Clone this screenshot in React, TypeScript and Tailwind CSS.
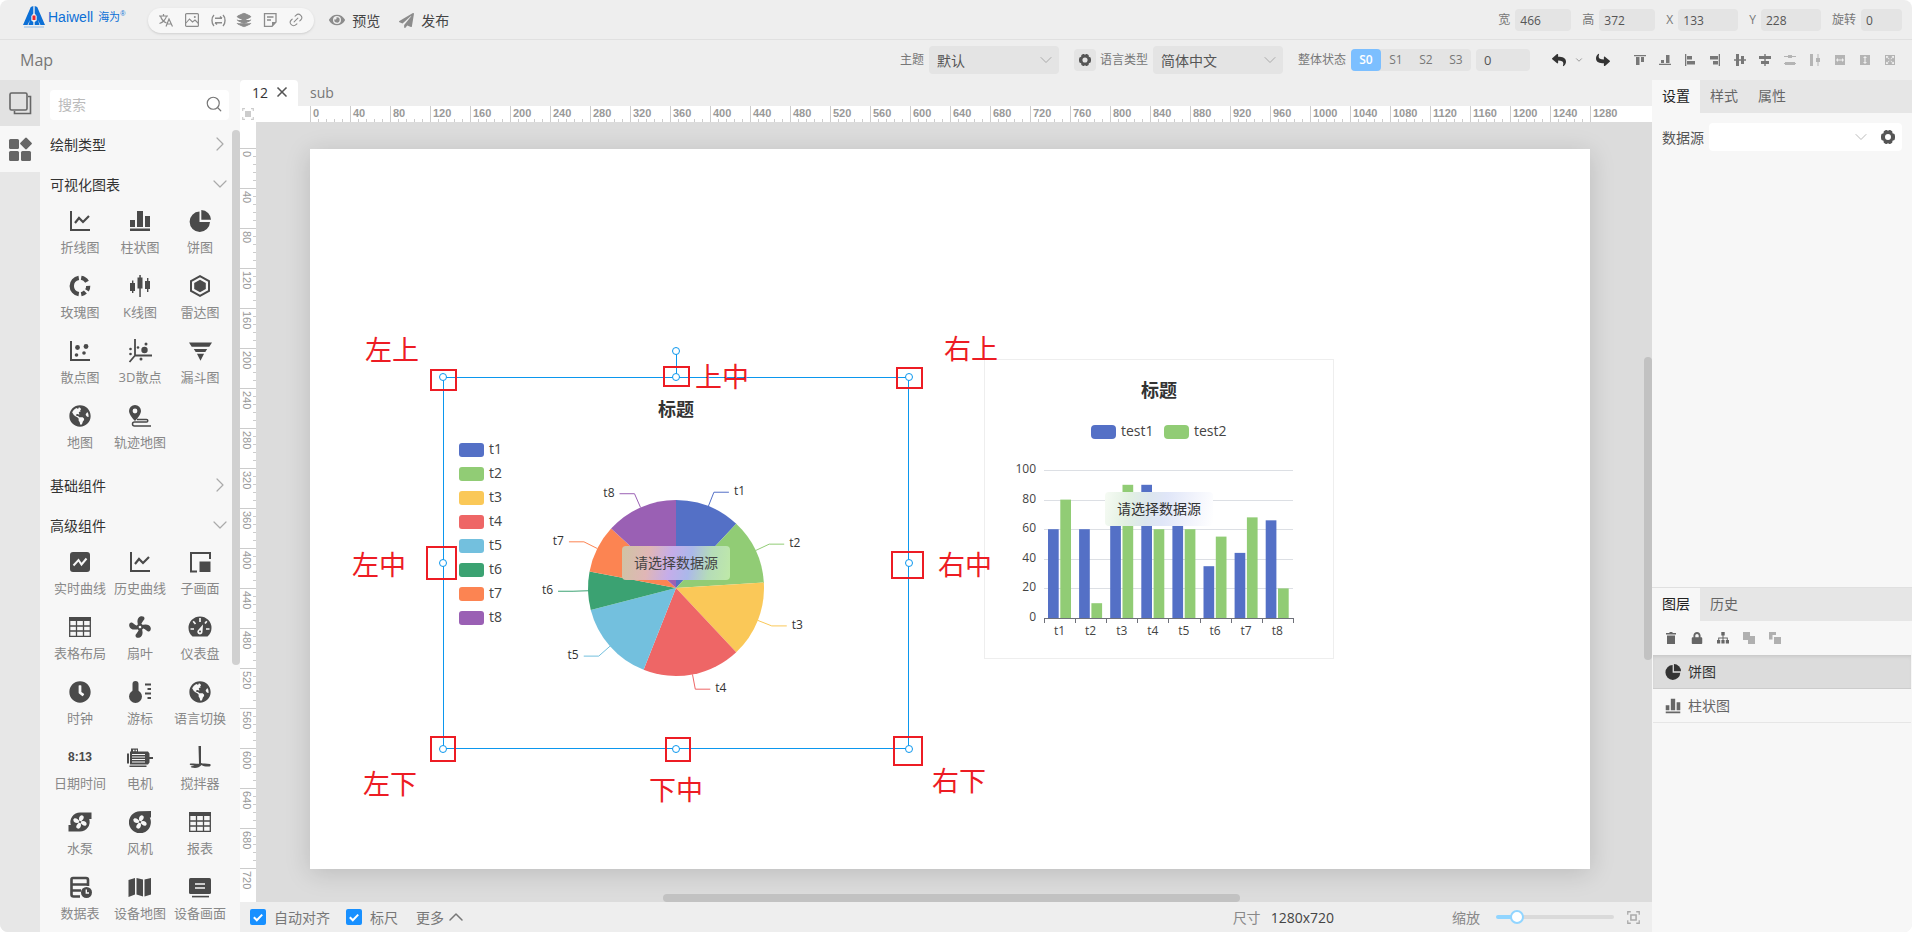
import { useState, type ReactNode } from 'react'
import { FaClock, FaEye, FaGlobeAmericas, FaLock, FaPaperPlane, FaReply } from 'react-icons/fa'
import { ChevronDown, ChevronRight, ChevronUp, Layers, Link2, Search, X } from 'lucide-react'

type IconProps = { children: ReactNode; size?: string; box?: number }

const Icon = ({ children, size = 'size-[22px]', box = 22 }: IconProps) => (
  <svg viewBox={`0 0 ${box} ${box}`} className={size} fill="currentColor" aria-hidden="true">
    {children}
  </svg>
)

const Stroke = ({ d, w = 2 }: { d: string; w?: number }) => (
  <path d={d} fill="none" stroke="currentColor" strokeWidth={w} />
)

/* ---------- Component library icons ---------- */

const LineIcon = () => (
  <Icon>
    <Stroke d="M2 1v19h19" />
    <Stroke d="M6 13l4-5 4 4 6-6" w={2.2} />
  </Icon>
)

const BarIcon = ({ size }: { size?: string }) => (
  <Icon size={size}>
    <path d="M1 10h5v7H1zM8 1h6v16H8zM16 6h5v11h-5zM1 18.6h20v2.4H1z" />
  </Icon>
)

const PieIcon = ({ size }: { size?: string }) => (
  <Icon size={size}>
    <path d="M10.500 1.500V12H21A10.200 10.200 0 1 1 10.500 1.500z" />
    <path d="M12.300 0A10 10 0 0 1 22 9.800h-9.700z" />
  </Icon>
)

const RoseIcon = () => (
  <Icon>
    <Stroke d="M9.8 2.800a8.300 8.300 0 0 0 0 16.400" w={4.4} />
    <Stroke d="M12.200 2.800a8.300 8.300 0 0 1 5.800 4M19.200 10.800a8.200 8.200 0 0 1-1.200 4.600M16.400 17a8.200 8.200 0 0 1-4.200 2.200" w={4.2} />
  </Icon>
)

const KLineIcon = () => (
  <Icon>
    <path d="M1 8h5v8H1zM3 5.500h1.400V18H3zM8.500 2.500h5v11h-5zM10.300 0h1.500v22h-1.500zM16 6h5v8h-5zM18 3h1.400v14H18z" />
  </Icon>
)

const RadarIcon = () => (
  <Icon>
    <Stroke d="M11 1.200l9 4.900v9.800l-9 4.900-9-4.900V6.100z" />
    <path d="M11 4.800l5.800 3.100v6.200L11 17.200l-5.800-3.100V7.900z" />
  </Icon>
)

const ScatterIcon = () => (
  <Icon>
    <Stroke d="M2 1v19h19" />
    <circle cx="8.500" cy="7.500" r="2.400" />
    <circle cx="17" cy="6.500" r="2.400" />
    <circle cx="7.500" cy="15" r="1.800" />
    <circle cx="15" cy="13" r="1.800" />
  </Icon>
)

const Scatter3dIcon = () => (
  <Icon size="size-6" box={24}>
    <Stroke d="M7 0v16.500h17M7 16.500L1.500 23" w={1.8} />
    <circle cx="16.500" cy="11" r="3.200" />
    <circle cx="18" cy="5" r="1.500" />
    <circle cx="10" cy="8.500" r="1.300" />
    <circle cx="2.500" cy="10" r="1.300" />
    <circle cx="2.500" cy="15" r="1.300" />
    <circle cx="13" cy="20" r="1.500" />
  </Icon>
)

const FunnelIcon = () => (
  <Icon size="size-[23px]">
    <path d="M0 2.500h22l-2.600 4H2.600zM4.600 8.500h12.800l-1.800 3H6.400zM7.600 13.200h6.800L11 19.800z" />
  </Icon>
)

const TrackIcon = () => (
  <Icon>
    <path
      fillRule="evenodd"
      d="M6 0a6 6 0 0 1 6 6c0 4-6 10-6 10S0 10 0 6a6 6 0 0 1 6-6zm0 3.600a2.400 2.400 0 1 0 0 4.800 2.400 2.400 0 0 0 0-4.800z"
    />
    <Stroke d="M8 14.500h9.500a1.300 1.300 0 0 1 0 2.600H5.500a2 2 0 0 0 0 4H22" w={1.5} />
  </Icon>
)

const RealtimeIcon = () => (
  <Icon>
    <rect x="1" y="1" width="20" height="20" rx="3" />
    <path d="M4.500 14.500l5-5.500 3 4.500 5-6" fill="none" stroke="#f7f7f7" strokeWidth="2" />
  </Icon>
)

const SubPageIcon = () => (
  <Icon>
    <Stroke d="M21 8V2H2v18.500h6" />
    <path d="M10.500 10.500H21.500V21H10.500z" />
  </Icon>
)

const TableIcon = () => (
  <Icon>
    <path d="M0 1h22v4H0z" />
    <Stroke d="M.7 4v16.300h20.600V4M.7 10h20.600M.7 15h20.600M7.500 5v15M14.500 5v15" w={1.3} />
  </Icon>
)

const FanIcon = () => (
  <Icon>
    {[0, 90, 180, 270].map((a) => (
      <path
        key={a}
        transform={`rotate(${a} 11 11)`}
        d="M9.600 9.800C7.600 6.500 8 1.200 11.800.3c2.800-.6 4.400 1.200 3.400 3.100C14 5.400 12.200 6.500 12.200 9.400z"
      />
    ))}
    <Stroke d="M11 8.600a2.400 2.400 0 1 0 0 4.800 2.400 2.400 0 0 0 0-4.800z" w={1.6} />
  </Icon>
)

const GaugeIcon = () => (
  <Icon size="size-6" box={24}>
    <path d="M12 1.500A11.500 11.500 0 0 0 .5 13c0 3.500 1.500 6.500 4 8.500h15c2.500-2 4-5 4-8.500A11.500 11.500 0 0 0 12 1.500z" />
    <path d="M12 3v4M5.200 6.200L7.500 9M18.800 6.200L17 8.500M2.500 14h3.500M18 14h3.500" stroke="#f7f7f7" strokeWidth="1.700" />
    <path d="M15 9.500l-.5 7.500a2.600 2.600 0 1 1-4.800-1.500z" fill="#f7f7f7" />
    <circle cx="12" cy="16.500" r="1" />
  </Icon>
)

const CursorIcon = () => (
  <Icon>
    <circle cx="6.500" cy="15.500" r="6.500" />
    <path d="M3.500 3a3 3 0 0 1 6 0v10h-6z" />
    <path d="M16 2.500h6v2h-6zM18.500 7h3.500v2h-3.500zM16 11.500h6v2h-6zM18.500 16h3.500v2h-3.500z" />
  </Icon>
)

const DateIcon = () => (
  <span className="font-['Liberation_Sans',sans-serif] text-[12px] leading-6 font-bold">8:13</span>
)

const MotorIcon = () => (
  <Icon size="size-[26px]" box={26}>
    <path d="M4 4.500h7v4H4zM0 9.500h2v10H0zM3 7.500h18l1.500 2v9l-1.500 2H3zM22 13h4v2h-4zM2.500 21.500h17V23h-17z" />
    <path d="M5 10.500h13M5 13h13M5 15.500h13M5 18h13" stroke="#f7f7f7" />
    <path d="M6 5.800h1.500v1.500H6zM8.600 5.800h1.400v1.500H8.600z" fill="#f7f7f7" />
  </Icon>
)

const MixerIcon = () => (
  <Icon>
    <path d="M9.500 0h2.500v17c2 1 5 .2 9 1 1 .3 1 2-.5 2.400-3 .5-6-.2-8-1.400-2.500 3-6 3.500-10 2.500-1-.3-1-1 0-1.300l3-.5-4-.7c-1-.3-1-1.200 0-1.400 3-.4 6 0 8.500.2z" />
  </Icon>
)

const Blades = ({ cx, cy }: { cx: number; cy: number }) => (
  <g transform={`translate(${cx} ${cy})`} fill="#f7f7f7">
    {[20, 110, 200, 290].map((a) => (
      <path key={a} transform={`rotate(${a})`} d="M0 0C-3-2-3-6.500 0-7 3-7 2.500-3 0 0z" />
    ))}
    <circle r="1.100" className="fill-[#4a4a4a]" />
  </g>
)

const PumpIcon = () => (
  <Icon size="size-[24px]" box={24}>
    <path d="M23.500 2.500V9h-2.300A9.600 9.600 0 0 1 12 21.500H.5V15h2.300A9.600 9.600 0 0 1 12 2.500z" />
    <Blades cx={12} cy={12} />
  </Icon>
)

const BlowerIcon = () => (
  <Icon>
    <path d="M22 0v6.500h-1.200A11 11 0 1 1 11 .3L22 0z" />
    <Blades cx={11} cy={11} />
  </Icon>
)

const DataTableIcon = () => (
  <Icon size="size-[23px]" box={23}>
    <Stroke d="M11 20.500H4.500a2 2 0 0 1-2-2v-15a1.500 1.500 0 0 1 1.500-1.500h13a2 2 0 0 1 2 2V10" w={2.6} />
    <Stroke d="M3 8.500h16M3 14.500h9" w={2.6} />
    <circle cx="17.500" cy="16.500" r="5.500" />
    <path d="M17.300 13.500v3.500H20" fill="none" stroke="#f7f7f7" strokeWidth="1.400" />
  </Icon>
)

const MapIcon = () => (
  <Icon size="size-[24px]" box={24}>
    <path d="M.5 5L7 3v16.500L.5 22zM8.500 3l6.500 1.500V21.500L8.500 19.500zM16.500 4.500L23 3v16.500l-6.500 2z" />
  </Icon>
)

const ScreenIcon = () => (
  <Icon>
    <rect x="0" y="2" width="22" height="16" rx="1.500" />
    <path d="M3 19.800h17v1.600H3z" />
    <path d="M6 8h10M6 12h10" stroke="#f7f7f7" strokeWidth="1.700" />
  </Icon>
)

const Gear = ({ size = 'size-[14px]' }: { size?: string }) => (
  <Icon size={size} box={14}>
    <path
      fillRule="evenodd"
      d="M4.800 0h.8l1.400.8L8.400 0h.8l2 1.200.3 2L13.500 4l.5 2v2l-.5 2-2 .8-.3 2-2 1.200h-.8L7 13.200 5.600 14h-.8l-2-1.200-.3-2L.5 10 0 8V6l.5-2 2-.8.3-2zM7 4a3 3 0 1 0 0 6 3 3 0 0 0 0-6z"
    />
  </Icon>
)

/* ---------- Top bars ---------- */

const Logo = () => (
  <div className="flex h-6 items-center gap-[3px]">
    <svg viewBox="0 0 22 22" className="h-[22px] w-[22px]" aria-hidden="true">
      <path d="M10.300 0v7.500L8.300 10v4.500l2 1.500v3H5.500L7 14l-2.500 5H0L7.800 1z" fill="#0b6fd6" />
      <path d="M11.700 0v7.500l2 2.500v4.500l-2 1.500v3h4.800L15 14l2.500 5H22L14.200 1z" fill="#0b6fd6" />
      <rect x="9.500" y="9.500" width="3" height="4.500" fill="#e8262c" />
      <path d="M1 20h20v2H1z" fill="#0b6fd6" opacity=".2" />
    </svg>
    <span className="flex items-center font-['Liberation_Sans','Noto_Sans_CJK_SC',sans-serif] text-[#0b6fd6]">
      <span className="text-[14px] leading-5">Haiwell</span>
      <span className="pl-[5px] text-[11px] leading-5">海为</span>
      <sup className="text-[7px]">®</sup>
    </span>
  </div>
)

const quickTools = [
  {
    name: '语言',
    icon: (
      <Icon size="size-[14px]" box={14}>
        <Stroke d="M0 3h9M4.500 1v2M7.500 3C7 6 4 9.500.5 10.500M1.500 3c1 3.500 3.500 6 6 7" w={1.2} />
        <Stroke d="M7 13.500L10 6l3.500 7.500M8 11h4.500" w={1.2} />
      </Icon>
    ),
  },
  {
    name: '图片',
    icon: (
      <Icon size="size-[14px]" box={14}>
        <rect x=".6" y=".6" width="12.800" height="12.800" rx="1" fill="none" stroke="currentColor" strokeWidth="1.200" />
        <Stroke d="M1 10l3.500-4 3 3 2.500-2 3.500 3.500" w={1.1} />
        <circle cx="9.800" cy="4" r="1" />
      </Icon>
    ),
  },
  {
    name: '变量',
    icon: (
      <Icon size="size-[15px]" box={15}>
        <Stroke d="M3 2C.3 4.500.3 10.500 3 13M12 2c2.700 2.500 2.700 8.500 0 11M4 5.300h7M9 3.500l2 1.800M11 9.700H4M6 11.500L4 9.700" w={1.4} />
      </Icon>
    ),
  },
  { name: '图层', icon: <Layers className="size-4 fill-[#8c8c8c]" strokeWidth={1.500} /> },
  {
    name: '备注',
    icon: (
      <Icon size="size-[14px]" box={14}>
        <path d="M13.300 9H9v4.500z" />
        <Stroke d="M9 13.300H1.500V.7h11.500V9zM4 4h6.500M4 7h4" w={1.3} />
      </Icon>
    ),
  },
  { name: '链接', icon: <Link2 className="size-4 -rotate-45" strokeWidth={1.600} /> },
]

const NumberField = ({ label, value, width }: { label: string; value: string; width: string }) => (
  <label className="flex items-center gap-[5px] text-[12px] text-[#777]">
    {label}
    <input
      defaultValue={value}
      className={`${width} h-[22px] rounded-sm bg-[#e4e4e4] px-[5px] text-[12px] text-[#555] outline-none`}
    />
  </label>
)

const TopBar = () => (
  <header className="flex h-10 items-center border-b border-[#e0e0e0] pr-2.5 pb-[5px] pl-[23px]">
    <Logo />
    <nav className="mt-1.5 ml-[23px] flex h-[25px] items-center rounded-full bg-[#f7f7f7] px-[5px] text-[#8c8c8c] shadow-sm">
      {quickTools.map((t) => (
        <button key={t.name} aria-label={t.name} className="flex w-[26px] justify-center">
          {t.icon}
        </button>
      ))}
    </nav>
    <button className="mt-1.5 ml-[15px] flex items-center gap-[7px] text-[14px] text-[#444]">
      <FaEye className="size-4 text-[#8c8c8c]" />
      预览
    </button>
    <button className="mt-1.5 ml-[19px] flex items-center gap-[7px] text-[14px] text-[#444]">
      <FaPaperPlane className="size-[15px] text-[#8c8c8c]" />
      发布
    </button>
    <div className="mt-1.5 ml-auto flex gap-[11px]">
      <NumberField label="宽" value="466" width="w-14" />
      <NumberField label="高" value="372" width="w-14" />
      <NumberField label="X" value="133" width="w-[60px]" />
      <NumberField label="Y" value="228" width="w-[60px]" />
      <NumberField label="旋转" value="0" width="w-[41px]" />
    </div>
  </header>
)

const BarSelect = ({ label, value }: { label: string; value: string }) => (
  <label className="flex items-center gap-[5px] text-[12px] text-[#777]">
    {label}
    <span className="relative">
      <select className="h-7 w-[130px] appearance-none rounded-sm bg-[#e4e4e4] px-2 text-[14px] text-[#555] outline-none">
        <option>{value}</option>
      </select>
      <ChevronDown className="pointer-events-none absolute top-1 right-[3px] size-5 text-[#aaa]" strokeWidth={1.200} />
    </span>
  </label>
)

const alignTools = [
  { name: '顶对齐', dim: false, d: 'M0 1h12v1.300H0zM2 3h3.500v8H2zM7 3h3v5H7z' },
  { name: '底对齐', dim: false, d: 'M0 9.700h12V11H0zM2 6h3v3H2zM7 1h3.500v8H7z' },
  { name: '左对齐', dim: false, d: 'M1 0h1.300v12H1zM3 2h5v3.500H3zM3 7h8v3.500H3z' },
  { name: '右对齐', dim: false, d: 'M9.700 0H11v12H9.700zM1 2h8v3.500H1zM4 7h5v3.500H4z' },
  { name: '垂直居中', dim: false, d: 'M0 5.300h12v1.400H0zM2 0h3v12H2zM7 2h3v8H7z' },
  { name: '水平居中', dim: false, d: 'M5.300 0h1.400v12H5.300zM0 2h12v3H0zM2 7h8v3H2z' },
  { name: '垂直分布', dim: true, d: 'M0 2h4V1h4v1h4v1H8v1H4V3H0zM0 9h1V8h10v1h1v1h-1v1H1v-1H0z' },
  { name: '水平分布', dim: true, d: 'M1 0h3v12H1zM8.500 0h1v4h1.500v4H9.500v4h-1V8H7V4h1.500z' },
  { name: '等宽', dim: true, d: 'M1 1h10v10H1zM2 6l2 2V6.600h4V8l2-2-2-2v1.400H4V4z' },
  { name: '等高', dim: true, d: 'M1 1h10v10H1zM6 2L4 4h1.400v4H4l2 2 2-2H6.600V4H8z' },
  { name: '等大小', dim: true, d: 'M1 1h10v10H1zM2 2v2.500l1-1 2 2 .6-.6-2-2 .9-.9zM10 2H7.500l.9.900-2 2 .6.600 2-2 1 1zM2 10V7.500l1 1 2-2 .6.600-2 2 .9.900zM10 10H7.500l.9-.9-2-2 .6-.6 2 2 1-1z' },
]

const ToolBar = () => {
  const [state, setState] = useState('S0')
  return (
    <div className="flex h-10 items-center pr-2.5 pl-5">
      <h1 className="text-[16px] text-[#777]">Map</h1>
      <div className="ml-auto flex items-center">
        <BarSelect label="主题" value="默认" />
        <button aria-label="语言设置" className="mr-1 ml-[15px] flex size-[22px] items-center justify-center rounded-sm bg-[#e4e4e4] text-[#555]">
          <Gear size="size-3" />
        </button>
        <BarSelect label="语言类型" value="简体中文" />
        <span className="mr-[5px] ml-[15px] text-[12px] text-[#777]">整体状态</span>
        <div className="flex h-[22px] rounded-sm bg-[#e4e4e4]">
          {['S0', 'S1', 'S2', 'S3'].map((s) => (
            <button
              key={s}
              onClick={() => setState(s)}
              className={
                s === state
                  ? 'w-[30px] rounded-sm bg-[#7cbfff] text-[12px] font-semibold text-white'
                  : 'w-[30px] text-[12px] text-[#777]'
              }
            >
              {s}
            </button>
          ))}
        </div>
        <input
          aria-label="状态值"
          defaultValue="0"
          className="ml-[5px] h-[22px] w-[54px] rounded-sm bg-[#e4e4e4] px-2 text-[13px] text-[#555] outline-none"
        />
        <button aria-label="撤销" className="ml-[22px]">
          <FaReply className="size-3.5 text-[#333]" />
        </button>
        <button aria-label="撤销记录" className="ml-2">
          <ChevronDown className="size-2.5 text-[#888]" />
        </button>
        <button aria-label="重做" className="mr-[17px] ml-3">
          <FaReply className="size-3.5 rotate-180 text-[#333]" />
        </button>
        {alignTools.map((t) => (
          <button
            key={t.name}
            aria-label={t.name}
            className={t.dim ? 'flex w-[25px] justify-center text-[#b4b4b4]' : 'flex w-[25px] justify-center text-[#777]'}
          >
            <Icon size="size-3" box={12}>
              <path d={t.d} fillRule={t.dim ? 'evenodd' : 'nonzero'} />
            </Icon>
          </button>
        ))}
      </div>
    </div>
  )
}

/* ---------- Component library ---------- */

const chartItems = [
  { name: '折线图', icon: <LineIcon /> },
  { name: '柱状图', icon: <BarIcon /> },
  { name: '饼图', icon: <PieIcon /> },
  { name: '玫瑰图', icon: <RoseIcon /> },
  { name: 'K线图', icon: <KLineIcon /> },
  { name: '雷达图', icon: <RadarIcon /> },
  { name: '散点图', icon: <ScatterIcon /> },
  { name: '3D散点', icon: <Scatter3dIcon /> },
  { name: '漏斗图', icon: <FunnelIcon /> },
  { name: '地图', icon: <FaGlobeAmericas className="size-[22px]" /> },
  { name: '轨迹地图', icon: <TrackIcon /> },
]

const advancedItems = [
  { name: '实时曲线', icon: <RealtimeIcon /> },
  { name: '历史曲线', icon: <LineIcon /> },
  { name: '子画面', icon: <SubPageIcon /> },
  { name: '表格布局', icon: <TableIcon /> },
  { name: '扇叶', icon: <FanIcon /> },
  { name: '仪表盘', icon: <GaugeIcon /> },
  { name: '时钟', icon: <FaClock className="size-[22px]" /> },
  { name: '游标', icon: <CursorIcon /> },
  { name: '语言切换', icon: <FaGlobeAmericas className="size-[22px]" /> },
  { name: '日期时间', icon: <DateIcon /> },
  { name: '电机', icon: <MotorIcon /> },
  { name: '搅拌器', icon: <MixerIcon /> },
  { name: '水泵', icon: <PumpIcon /> },
  { name: '风机', icon: <BlowerIcon /> },
  { name: '报表', icon: <TableIcon /> },
  { name: '数据表', icon: <DataTableIcon /> },
  { name: '设备地图', icon: <MapIcon /> },
  { name: '设备画面', icon: <ScreenIcon /> },
]

const Group = ({ title, items }: { title: string; items?: { name: string; icon: ReactNode }[] }) => (
  <section>
    <button className="flex h-10 w-full items-center justify-between pl-2.5 text-[14px] text-[#333]">
      {title}
      {items ? (
        <ChevronDown className="size-6 text-[#aaa]" strokeWidth={1.200} />
      ) : (
        <ChevronRight className="size-6 text-[#aaa]" strokeWidth={1.200} />
      )}
    </button>
    {items && (
      <div className="grid grid-cols-3 pt-px pr-0.5 pl-2.5">
        {items.map((item) => (
          <button key={item.name} className="flex h-[65px] flex-col items-center pt-1 text-[#4a4a4a]">
            <span className="flex h-6 items-center">{item.icon}</span>
            <span className="pt-1 text-[13px] leading-5 whitespace-nowrap text-[#888]">{item.name}</span>
          </button>
        ))}
      </div>
    )}
  </section>
)

const Library = () => (
  <aside className="flex w-60 shrink-0">
    <div className="w-10 bg-[#e7e7e7] text-[#666]">
      <button aria-label="画面" className="flex h-[46px] w-10 items-center justify-center bg-[#e2e2e2]">
        <Icon size="size-[23px]" box={23}>
          <rect x="1" y="1" width="17" height="17" rx="1.500" fill="none" stroke="currentColor" strokeWidth="1.600" />
          <Stroke d="M19 4.500h2.500v17h-16V19" w={1.600} />
        </Icon>
      </button>
      <button aria-label="组件" className="flex h-[46px] w-10 items-center justify-center bg-[#f7f7f7]">
        <Icon size="size-[24px]" box={24}>
          <rect x="1" y="2" width="10" height="10" rx="1.500" />
          <rect x="1" y="14" width="10" height="10" rx="1.500" />
          <rect x="13" y="14" width="10" height="10" rx="1.500" />
          <rect x="13.500" y="2" width="9" height="9" rx="1.200" transform="rotate(45 18 6.500)" />
        </Icon>
      </button>
    </div>
    <div className="flex min-w-0 flex-1 flex-col bg-[#f7f7f7]">
      <div className="py-2.5 pr-[11px] pl-2.5">
        <label className="flex h-[30px] items-center rounded-sm bg-white pr-1.5 pb-0.5 pl-2">
          <input
            aria-label="搜索"
            placeholder="搜索"
            className="min-w-0 flex-1 text-[14px] outline-none placeholder:text-[#bbb]"
          />
          <Search className="size-[18px] text-[#777]" strokeWidth={1.600} />
        </label>
      </div>
      <div className="flex min-h-0 flex-1">
        <div className="min-w-0 flex-1 overflow-hidden">
          <div className="-mt-1.5">
            <Group title="绘制类型" />
            <Group title="可视化图表" items={chartItems} />
            <Group title="基础组件" />
            <Group title="高级组件" items={advancedItems} />
          </div>
        </div>
        <div className="w-2">
          <div className="h-2/3 rounded-full bg-[#d0d0d0]" />
        </div>
      </div>
    </div>
  </aside>
)

/* ---------- Rulers ---------- */

const hMarks = Array.from({ length: 33 }, (_, i) => i * 40)
const vMarks = Array.from({ length: 19 }, (_, i) => i * 40)

const RulerTop = () => (
  <div className="flex h-4 overflow-hidden bg-white pl-[54px] font-['Liberation_Sans',sans-serif] text-[11px] font-bold text-[#999]">
    {hMarks.map((m) => (
      <div key={m} className="flex h-4 w-10 shrink-0 flex-col justify-between border-l border-[#ccc]">
        <span className="h-[13px] pl-0.5 leading-[14px]">{m}</span>
        {m < 1280 && (
          <span className="flex h-[3px] gap-[7px] pl-[7px]">
            <i className="w-px bg-[#ccc]" />
            <i className="w-px bg-[#ccc]" />
            <i className="w-px bg-[#ccc]" />
            <i className="w-px bg-[#ccc]" />
          </span>
        )}
      </div>
    ))}
  </div>
)

const RulerLeft = () => (
  <div className="flex w-4 shrink-0 flex-col overflow-hidden bg-white pt-[26px] font-['Liberation_Sans',sans-serif] text-[11px] text-[#999]">
    {vMarks.map((m) => (
      <div key={m} className="flex h-10 w-4 shrink-0 justify-between border-t border-[#ccc]">
        <span className="w-[13px] pt-0.5 leading-[13px] [writing-mode:vertical-rl]">{m}</span>
        {m < 720 && (
          <span className="flex w-[3px] flex-col gap-[7px] pt-[7px]">
            <i className="h-px bg-[#ccc]" />
            <i className="h-px bg-[#ccc]" />
            <i className="h-px bg-[#ccc]" />
            <i className="h-px bg-[#ccc]" />
          </span>
        )}
      </div>
    ))}
  </div>
)

/* ---------- Charts ---------- */

const palette = ['#5470c6', '#91cc75', '#fac858', '#ee6666', '#73c0de', '#3ba272', '#fc8452', '#9a60b4']
const test1 = [60, 60, 70, 90, 75, 35, 44, 66]
const test2 = [80, 10, 90, 60, 60, 55, 68, 20]

const point = (cx: number, cy: number, r: number, a: number) => [cx + r * Math.sin(a), cy - r * Math.cos(a)]

const PieChart = () => {
  const total = test1.reduce((a, b) => a + b, 0)
  const cx = 233
  const cy = 211
  let angle = 0
  const slices = test1.map((v, i) => {
    const from = angle
    angle += (v / total) * Math.PI * 2
    const mid = (from + angle) / 2
    const [x1, y1] = point(cx, cy, 88, from)
    const [x2, y2] = point(cx, cy, 88, angle)
    const [lx, ly] = point(cx, cy, 88, mid)
    const [mx, my] = point(cx, cy, 103, mid)
    const side = mid < Math.PI ? 1 : -1
    return { i, side, my, mx, d: `M${cx} ${cy}L${x1} ${y1}A88 88 0 0 1 ${x2} ${y2}z`, line: `M${lx} ${ly}L${mx} ${my}h${side * 15}` }
  })
  return (
    <svg className="size-full" viewBox="0 0 466 372">
      <text x="233" y="39" textAnchor="middle" fontSize="18" fontWeight="bold" fill="#333">
        标题
      </text>
      {palette.map((c, i) => (
        <g key={c}>
          <rect x="16" y={66 + i * 24} width="25" height="14" rx="3" fill={c} />
          <text x="46" y={77 + i * 24} fontSize="14" fill="#444">{`t${i + 1}`}</text>
        </g>
      ))}
      {slices.map((s) => (
        <g key={s.i}>
          <path d={s.d} fill={palette[s.i]} />
          <path d={s.line} fill="none" stroke={palette[s.i]} />
          <text x={s.mx + s.side * 20} y={s.my + 3} fontSize="12" textAnchor={s.side > 0 ? 'start' : 'end'} fill="#333">
            {`t${s.i + 1}`}
          </text>
        </g>
      ))}
    </svg>
  )
}

const BarChart = () => (
  <svg className="size-full" viewBox="0 0 350 300">
    <rect x=".5" y=".5" width="349" height="299" fill="none" stroke="#eee" />
    <text x="175" y="38" textAnchor="middle" fontSize="18" fontWeight="bold" fill="#333">
      标题
    </text>
    <rect x="107" y="66" width="25" height="14" rx="4" fill="#5470c6" />
    <text x="137" y="77" fontSize="14" fill="#444">
      test1
    </text>
    <rect x="180" y="66" width="25" height="14" rx="4" fill="#91cc75" />
    <text x="210" y="77" fontSize="14" fill="#444">
      test2
    </text>
    {[0, 20, 40, 60, 80, 100].map((v) => {
      const y = 259 - v * 1.48
      return (
        <g key={v}>
          <path d={`M60 ${Math.round(y) + 0.5}h249`} stroke="#dcdfe4" />
          <text x="52" y={y + 3} fontSize="12" textAnchor="end" fill="#444">
            {v}
          </text>
        </g>
      )
    })}
    {test1.map((v, i) => (
      <g key={i}>
        <rect x={64 + i * 31.1} y={259 - v * 1.48} width="10.700" height={v * 1.48} fill="#5470c6" />
        <rect x={76.3 + i * 31.1} y={259 - test2[i] * 1.48} width="10.700" height={test2[i] * 1.48} fill="#91cc75" />
        <text x={75.500 + i * 31.1} y="276" fontSize="12" textAnchor="middle" fill="#444">
          {`t${i + 1}`}
        </text>
      </g>
    ))}
    <path d="M60 259.500h250" stroke="#6e7079" />
    {Array.from({ length: 9 }, (_, i) => (
      <path key={i} d={`M${Math.round(60 + i * 31.1) + 0.5} 259v5`} stroke="#6e7079" />
    ))}
  </svg>
)

/* ---------- Stage ---------- */

// positions are relative to the 1280x720 stage
const handles = [
  'left-[129px] top-[224px]',
  'left-[362px] top-[224px]',
  'left-[595px] top-[224px]',
  'left-[129px] top-[410px]',
  'left-[595px] top-[410px]',
  'left-[129px] top-[596px]',
  'left-[362px] top-[596px]',
  'left-[595px] top-[596px]',
  'left-[362px] top-[198px]',
]

const marks = [
  'left-[120px] top-[220px] w-[27px] h-[22px]',
  'left-[353px] top-[217px] w-[27px] h-[21px]',
  'left-[586px] top-[218px] w-[27px] h-[22px]',
  'left-[116px] top-[397px] w-[31px] h-[34px]',
  'left-[581px] top-[402px] w-[33px] h-[28px]',
  'left-[120px] top-[587px] w-[26px] h-[26px]',
  'left-[355px] top-[588px] w-[26px] h-[25px]',
  'left-[583px] top-[587px] w-[30px] h-[30px]',
]

const notes = [
  { text: '左上', pos: 'left-[55px] top-[187px]' },
  { text: '上中', pos: 'left-[385px] top-[214px]' },
  { text: '右上', pos: 'left-[634px] top-[186px]' },
  { text: '左中', pos: 'left-[42px] top-[402px]' },
  { text: '右中', pos: 'left-[628px] top-[402px]' },
  { text: '左下', pos: 'left-[53px] top-[621px]' },
  { text: '下中', pos: 'left-[339px] top-[627px]' },
  { text: '右下', pos: 'left-[622px] top-[618px]' },
]

const Stage = () => (
  <div className="relative mt-[27px] ml-[54px] h-[720px] w-[1280px] shrink-0 bg-white shadow-[0_4px_24px_rgba(0,0,0,0.15)]">
    <div className="absolute top-[210px] left-[674px] h-[300px] w-[350px]">
      <BarChart />
      <div className="absolute top-[133px] left-[121px] flex h-[34px] w-[108px] items-center justify-center rounded bg-[linear-gradient(100deg,#f6fbf4_0%,#e2f0e2_22%,#dce6ee_40%,#e0e6f8_55%,#f2f4fc_80%,#ffffff_100%)] pb-0.5 text-[14px] text-[#333]">
        请选择数据源
      </div>
    </div>
    <div className="absolute top-[228px] left-[133px] h-[372px] w-[466px]">
      <PieChart />
      <div className="absolute top-[169px] left-[179px] flex h-[34px] w-[108px] items-center justify-center rounded bg-[linear-gradient(100deg,#cfc4a4_0%,#e0b6b6_25%,#c5adea_45%,#abb8ea_62%,#b5dcb8_80%,#bfe9a8_100%)] pb-0.5 text-[14px] text-[#444]">
        请选择数据源
      </div>
    </div>
    <div className="absolute top-[228px] left-[133px] h-[372px] w-[466px] border border-[#0b97ee]" />
    <div className="absolute top-[203px] left-[366px] h-[25px] w-px bg-[#0b97ee]" />
    {handles.map((pos) => (
      <span key={pos} className={`absolute size-2 rounded-full border border-[#0b97ee] bg-white ${pos}`} />
    ))}
    {marks.map((pos) => (
      <span key={pos} className={`absolute border-2 border-[#ed1c24] ${pos}`} />
    ))}
    {notes.map((n) => (
      <span key={n.text} className={`absolute text-[27px] leading-[27px] whitespace-nowrap text-[#ed1c24] ${n.pos}`}>
        {n.text}
      </span>
    ))}
  </div>
)

const FrameIcon = ({ size }: { size: string }) => (
  <Icon size={size} box={12}>
    <Stroke d="M.7 3.500V.7h2.800M8.500.7h2.800v2.800M11.300 8.500v2.800H8.500M3.500 11.300H.7V8.500" w={1.2} />
    <Stroke d="M3.600 3.600h4.800v4.800H3.600z" w={1.4} />
  </Icon>
)

const CheckBox = ({ label }: { label: string }) => (
  <label className="flex items-center gap-2">
    <span className="relative flex">
      <input type="checkbox" defaultChecked className="peer size-4 appearance-none rounded-xs bg-white checked:bg-[#1890ff]" />
      <svg viewBox="0 0 16 16" className="pointer-events-none absolute inset-0 size-4 opacity-0 peer-checked:opacity-100">
        <path d="M3.800 8.200l3 3 5.400-5.600" fill="none" stroke="#fff" strokeWidth="2" />
      </svg>
    </span>
    {label}
  </label>
)

const Editor = () => (
  <main className="flex min-w-0 flex-1 flex-col">
    <div className="flex h-[26px] items-center text-[14px] text-[#777]">
      <div className="flex h-[26px] w-[58px] items-center justify-between rounded-t-sm bg-white pr-2 pb-0.5 pl-3 text-[#333]">
        12
        <button aria-label="关闭">
          <X className="size-4 text-[#555]" strokeWidth={2.500} />
        </button>
      </div>
      <button className="px-3 pb-0.5">sub</button>
    </div>
    <div className="flex bg-white">
      <button aria-label="居中" className="flex h-4 w-4 items-center justify-center text-[#ccc]">
        <Icon size="size-3" box={12}>
          <Stroke d="M.7 3V.7H3M9 .7h2.300V3M11.300 9v2.300H9M3 11.300H.7V9" w={1.2} />
          <path d="M3 3h6v6H3z" />
        </Icon>
      </button>
      <div className="min-w-0 flex-1">
        <RulerTop />
      </div>
    </div>
    <div className="flex min-h-0 flex-1">
      <RulerLeft />
      <div className="flex min-w-0 flex-1 flex-col overflow-hidden bg-[#dcdcdc]">
        <div className="flex min-h-0 flex-1">
          <div className="min-h-0 min-w-0 flex-1">
            <Stage />
          </div>
          <div className="flex w-2 flex-col justify-start pt-[235px]">
            <div className="h-[303px] rounded-full bg-[#c2c2c2]" />
          </div>
        </div>
        <div className="relative flex h-2 justify-center pr-1.5">
          <div className="w-[577px] rounded-full bg-[#c2c2c2]" />
        </div>
      </div>
    </div>
    <footer className="flex h-[30px] items-center bg-[#eee] px-2.5 text-[14px] text-[#777]">
      <CheckBox label="自动对齐" />
      <span className="w-4" />
      <CheckBox label="标尺" />
      <button className="ml-[18px] flex items-center">
        更多
        <ChevronUp className="size-6" strokeWidth={1.500} />
      </button>
      <span className="ml-auto text-[#888]">尺寸</span>
      <span className="ml-2.5 text-[#444]">1280x720</span>
      <label className="ml-[118px] flex items-center gap-4 text-[#888]">
        缩放
        <input
          type="range"
          defaultValue={13}
          className="h-1 w-[118px] appearance-none rounded-full bg-linear-to-r from-[#91d5ff] from-15% to-[#dadada] to-15% [&::-webkit-slider-thumb]:size-3.5 [&::-webkit-slider-thumb]:appearance-none [&::-webkit-slider-thumb]:rounded-full [&::-webkit-slider-thumb]:border-2 [&::-webkit-slider-thumb]:border-[#91d5ff] [&::-webkit-slider-thumb]:bg-white"
        />
      </label>
      <button aria-label="全屏" className="mr-0.5 ml-[13px] text-[#aaa]">
        <FrameIcon size="size-[13px]" />
      </button>
    </footer>
  </main>
)

/* ---------- Right side ---------- */

const Tabs = ({ names }: { names: string[] }) => (
  <div className="flex h-[33px] bg-[#e6e6e6] text-[14px]">
    {names.map((n, i) => (
      <button key={n} className={i === 0 ? 'bg-[#f7f7f7] px-2.5 pb-0.5 text-[#222]' : 'px-2.5 pb-0.5 text-[#666]'}>
        {n}
      </button>
    ))}
  </div>
)

const layerTools = [
  { name: '删除', d: 'M4.500 0h3v1h-3zM1 1h10v1.600H1zM2 3.400h8V12H2z', dim: false },
  { name: '组合', d: 'M4.300 0h3.400v3.600H4.300zM5.500 3h1v3h-1zM1.200 5.500h9.600v1H1.200zM1.200 6h1v2h-1zM5.500 6h1v2h-1zM9.800 6h1v2h-1zM0 8h3.200v3.500H0zM4.400 8h3.200v3.500H4.400zM8.800 8H12v3.500H8.800z', dim: false },
  { name: '置顶', d: 'M0 0h7v4h5v8H5V8H0z', dim: true },
  { name: '置底', d: 'M0 0h7v3H3.500v4.500H0zM5 5h7v7H5z', dim: true },
]

const LayerTool = ({ tool }: { tool: (typeof layerTools)[number] }) => (
  <button aria-label={tool.name} className={tool.dim ? 'flex w-[26px] justify-center text-[#b0b0b0]' : 'flex w-[26px] justify-center text-[#666]'}>
    <Icon size="size-3" box={12}>
      <path d={tool.d} />
    </Icon>
  </button>
)

const Inspector = () => (
  <aside className="flex w-[260px] shrink-0 flex-col bg-[#f7f7f7]">
    <section className="flex min-h-0 flex-1 flex-col">
      <Tabs names={['设置', '样式', '属性']} />
      <label className="flex items-center gap-[5px] p-2.5 text-[14px] text-[#555]">
        数据源
        <span className="relative flex flex-1">
          <select className="h-7 w-full appearance-none rounded-sm bg-white outline-none" />
          <ChevronDown className="pointer-events-none absolute top-1 right-[31px] size-5 text-[#bbb]" strokeWidth={1.200} />
          <span className="pointer-events-none absolute top-[7px] right-[7px]">
            <Gear />
          </span>
        </span>
      </label>
    </section>
    <section className="flex h-[345px] flex-col border-t border-[#e0e0e0]">
      <Tabs names={['图层', '历史']} />
      <div className="flex h-[34px] items-center pl-1.5">
        <LayerTool tool={layerTools[0]} />
        <button aria-label="锁定" className="flex w-[26px] justify-center text-[#666]">
          <FaLock className="size-3" />
        </button>
        {layerTools.slice(1).map((t) => (
          <LayerTool key={t.name} tool={t} />
        ))}
      </div>
      <ul className="px-px text-[14px]">
        <li className="flex h-[34px] items-center gap-[7px] border-b border-[#ccc] bg-[#dcdcdc] pl-3 text-[#333] shadow-[inset_0_3px_4px_-2px_rgba(0,0,0,0.12)]">
          <PieIcon size="size-4" />
          饼图
        </li>
        <li className="flex h-[34px] items-center gap-[7px] border-b border-[#e6e6e6] pl-3 text-[#666]">
          <BarIcon size="size-4" />
          柱状图
        </li>
      </ul>
    </section>
  </aside>
)

export default function App() {
  return (
    <div className="flex h-screen flex-col overflow-hidden rounded-lg bg-[#eee] font-['Open_Sans','Noto_Sans_CJK_SC',sans-serif]">
      <TopBar />
      <ToolBar />
      <div className="flex min-h-0 flex-1">
        <Library />
        <Editor />
        <Inspector />
      </div>
    </div>
  )
}
